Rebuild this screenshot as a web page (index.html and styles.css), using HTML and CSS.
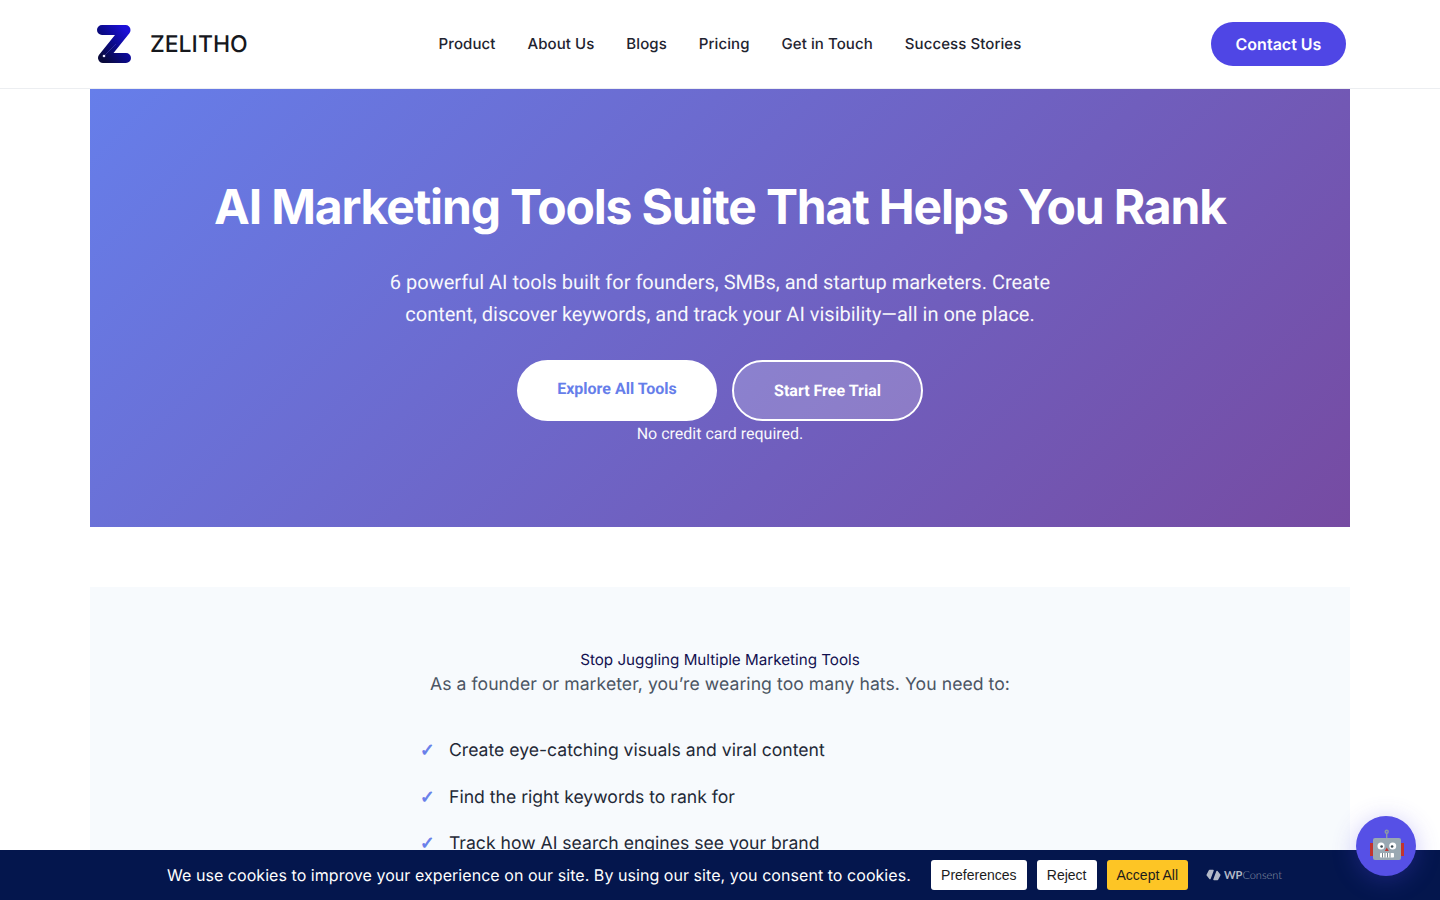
FILE: index.html
```html
<!DOCTYPE html>
<html lang="en">
<head>
    <meta charset="UTF-8">
    <meta name="viewport" content="width=device-width, initial-scale=1.0">
    <title>Zelitho - AI Marketing Tools Suite</title>
    <link rel="stylesheet" href="styles.css">
</head>
<body>
    <!-- Header -->
    <header class="site-header">
        <a class="brand" href="#">
            <svg class="brand-logo" width="36" height="40" viewBox="0 0 36 40">
                <defs>
                    <linearGradient id="zfill" x1="0" y1="1" x2="1" y2="0">
                        <stop offset="0" stop-color="#0a0a3c"/>
                        <stop offset="0.5" stop-color="#0b0a8c"/>
                        <stop offset="1" stop-color="#1c10d8"/>
                    </linearGradient>
                </defs>
                <path d="M6 6H29.500L7 34H30" fill="none" stroke="url(#zfill)" stroke-width="10" stroke-linecap="round" stroke-linejoin="round"/>
                <path d="M8 32 20 20" stroke="#5a55c8" stroke-width="0.600" opacity="0.7"/>
                <circle cx="8" cy="32" r="1.300" fill="#e8e8ff"/>
            </svg>
            <span class="brand-name">ZELITHO</span>
        </a>
        <nav class="main-nav">
            <a href="#">Product</a>
            <a href="#">About Us</a>
            <a href="#">Blogs</a>
            <a href="#">Pricing</a>
            <a href="#">Get in Touch</a>
            <a href="#">Success Stories</a>
        </nav>
        <a class="btn-contact" href="#">Contact Us</a>
    </header>

    <!-- Hero -->
    <section class="hero">
        <h1>AI Marketing Tools Suite That Helps You Rank</h1>
        <p class="hero-text">6 powerful AI tools built for founders, SMBs, and startup marketers. Create content, discover keywords, and track your AI visibility—all in one place.</p>
        <div class="hero-actions">
            <a class="btn btn-white" href="#">Explore All Tools</a>
            <a class="btn btn-ghost" href="#">Start Free Trial</a>
        </div>
        <p class="hero-note">No credit card required.</p>
    </section>

    <!-- Problem list -->
    <section class="problem">
        <h2>Stop Juggling Multiple Marketing Tools</h2>
        <p class="problem-text">As a founder or marketer, you’re wearing too many hats. You need to:</p>
        <ul class="check-list">
            <li>Create eye-catching visuals and viral content</li>
            <li>Find the right keywords to rank for</li>
            <li>Track how AI search engines see your brand</li>
        </ul>
    </section>

    <!-- Cookie bar -->
    <div class="cookie-bar">
        <span class="cookie-text">We use cookies to improve your experience on our site. By using our site, you consent to cookies.</span>
        <div class="cookie-buttons">
            <button class="cookie-btn cookie-prefs">Preferences</button>
            <button class="cookie-btn">Reject</button>
            <button class="cookie-btn cookie-accept">Accept All</button>
        </div>
        <span class="wpconsent">
            <svg width="15" height="12" viewBox="0 0 15 12">
                <path d="M3.500 1.500H7L4 9.500 1.200 6Z" fill="#b4bac8" stroke="#b4bac8" stroke-width="1.500" stroke-linejoin="round"/>
                <path d="M11.500 10.500H8L11 2.500 13.800 6Z" fill="#b4bac8" stroke="#b4bac8" stroke-width="1.500" stroke-linejoin="round"/>
            </svg>
            <span><b>WP</b>Consent</span>
        </span>
    </div>

    <!-- Chat bubble -->
    <button class="chat-bubble" aria-label="Open chat">
        <svg width="36" height="36" viewBox="0 0 36 36">
            <rect x="18" y="5" width="1.400" height="6" fill="#8d9aa3"/>
            <circle cx="18.700" cy="3.800" r="2.200" fill="#8d9aa3"/>
            <circle cx="18.700" cy="3.800" r="0.800" fill="#5b5fe0"/>
            <rect x="2" y="15" width="3.500" height="13" fill="#c1342e"/>
            <rect x="32.500" y="15" width="3.500" height="13" fill="#c1342e"/>
            <rect x="5" y="10" width="28" height="22" rx="2" fill="#99a8b2"/>
            <circle cx="13" cy="18" r="3.500" fill="#fff"/>
            <circle cx="24.700" cy="18" r="3.500" fill="#fff"/>
            <circle cx="13.600" cy="18.500" r="1.300" fill="#3c4a52"/>
            <circle cx="24.100" cy="18.500" r="1.300" fill="#3c4a52"/>
            <path d="M18.800 19.500 20.800 23H16.800Z" fill="#c1342e"/>
            <rect x="12" y="25" width="14" height="4.500" rx="0.800" fill="#fff"/>
            <path d="M14.500 25V29.500M17 25V29.500M19.500 25V29.500M22 25V29.500" stroke="#66757f" stroke-width="0.900"/>
        </svg>
    </button>
</body>
</html>
```

FILE: styles.css
```css
* {
    box-sizing: border-box;
}
html, body {
    height: 100%;
}
body {
    margin: 0;
    font-family: Inter, Arial, sans-serif;
    background-color: #fff;
    color: #1f2937;
    overflow: hidden;
    text-rendering: geometricPrecision;
}
a {
    text-decoration: none;
}
.site-header {
    height: 89px;
    padding: 0 94px 0 96px;
    display: flex;
    align-items: center;
    justify-content: space-between;
    border-bottom: 1px solid #eceef1;
}
.brand {
    display: flex;
    align-items: center;
    gap: 18px;
    width: 153px;
}
.brand-name {
    font-size: 23px;
    font-weight: 500;
    color: #16181d;
}
.main-nav {
    display: flex;
    gap: 32px;
    padding-bottom: 2px;
}
.main-nav a {
    font-size: 15px;
    font-weight: 500;
    letter-spacing: 0.080px;
    color: #1f2430;
}
.btn-contact {
    width: 135px;
    height: 44px;
    border-radius: 22px;
    background: #4f46e5;
    color: #fff;
    font-size: 16px;
    font-weight: 600;
    display: flex;
    align-items: center;
    justify-content: center;
}
.hero {
    width: 1260px;
    height: 438px;
    margin: 0 auto;
    padding-top: 88px;
    background: linear-gradient(135deg, #667eea 0%, #764ba2 100%);
    color: #fff;
    text-align: center;
}
.hero h1 {
    margin: 0;
    font-size: 48px;
    line-height: 60px;
    font-weight: 700;
    letter-spacing: -1.160px;
}
.hero-text {
    width: 700px;
    margin: 29px auto 30px;
    font-family: Roboto, Arial, sans-serif;
    font-size: 20px;
    line-height: 32px;
    opacity: 0.95;
}
.hero-actions {
    display: flex;
    justify-content: center;
    gap: 15px;
}
.btn {
    height: 61px;
    border-radius: 31px;
    font-family: Roboto, Arial, sans-serif;
    font-size: 16px;
    font-weight: 700;
    display: flex;
    align-items: center;
    justify-content: center;
}
.btn-white {
    width: 200px;
    padding-bottom: 4px;
    background: #fff;
    color: #667eea;
}
.btn-ghost {
    width: 191px;
    background: rgba(255, 255, 255, 0.2);
    border: 2px solid #fff;
    color: #fff;
}
.hero-note {
    margin: 3px 0 0;
    font-family: Roboto, Arial, sans-serif;
    font-size: 16px;
    line-height: 20px;
    opacity: 0.95;
}
.problem {
    width: 1260px;
    margin: 60px auto 0;
    padding-top: 61px;
    background: #f7fafd;
    text-align: center;
    height: 400px;
}
.problem h2 {
    margin: 0;
    font-size: 15.200px;
    line-height: 24px;
    font-weight: 400;
    color: #12104f;
}
.problem-text {
    margin: 0;
    font-size: 17.600px;
    line-height: 26px;
    letter-spacing: 0.060px;
    color: #4b5563;
}
.check-list {
    list-style: none;
    width: 600px;
    margin: 30px auto 0;
    padding: 0;
    text-align: left;
}
.check-list li {
    font-size: 17.600px;
    line-height: 26.600px;
    padding: 10px 0 10px 29px;
    position: relative;
    color: #1f2937;
}
.check-list li::before {
    content: "✓";
    position: absolute;
    left: 0;
    top: 10px;
    font-family: "DejaVu Sans", sans-serif;
    color: #667eea;
    -webkit-text-stroke: 0.700px #667eea;
}
.cookie-bar {
    position: fixed;
    left: 0;
    right: 0;
    bottom: 0;
    height: 50px;
    padding-left: 167px;
    background: #04164d;
    display: flex;
    align-items: center;
    color: #fff;
}
.cookie-text {
    font-size: 16px;
    letter-spacing: 0.050px;
}
.cookie-buttons {
    display: flex;
    gap: 10px;
    margin-left: 20px;
}
.cookie-btn {
    height: 30px;
    padding: 0 10px;
    border: none;
    border-radius: 3px;
    background: #fff;
    color: #1c1c1c;
    font-family: "Liberation Sans", Arial, sans-serif;
    font-size: 14px;
}
.cookie-prefs {
    width: 96px;
}
.cookie-accept {
    background: #fdc525;
}
.wpconsent {
    margin-left: 18px;
    display: flex;
    align-items: center;
    gap: 3px;
    font-family: Lato, Arial, sans-serif;
    font-size: 11px;
    font-weight: 300;
    color: #8e96a8;
}
.wpconsent b {
    font-weight: 700;
    color: #b4bac8;
}
.chat-bubble {
    position: fixed;
    right: 24px;
    bottom: 24px;
    width: 60px;
    height: 60px;
    padding: 0;
    border: none;
    border-radius: 50%;
    background: #5650e6;
    box-shadow: 0 4px 24px rgba(79, 70, 229, 0.3);
    display: flex;
    align-items: center;
    justify-content: center;
}
```
